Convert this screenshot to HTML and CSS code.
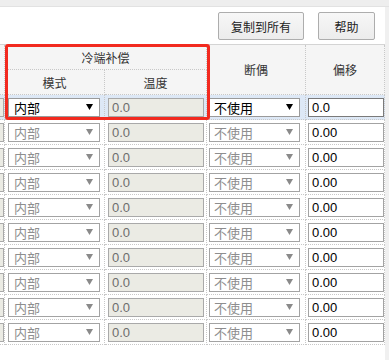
FILE: index.html
```html
<!DOCTYPE html>
<html>
<head>
<meta charset="utf-8">
<link rel="stylesheet" href="styles.css">
</head>
<body>
<div class="topbar"></div>
<div class="main">
  <div class="content">
    <div class="toolbar">
      <button class="btn btn-copy">复制到所有</button>
      <button class="btn btn-help">帮助</button>
    </div>
    <div class="tablewrap">
      <div class="grid">
        <div class="hcell c0 span2"></div>
        <div class="hcell group">冷端补偿</div>
        <div class="hcell c3 span2">断偶</div>
        <div class="hcell c4 span2">偏移</div>
        <div class="hcell c1">模式</div>
        <div class="hcell c2">温度</div>

        <div class="cell c0 sel"><span class="stub"></span></div>
        <div class="cell c1 sel"><div class="select active"><span>内部</span><svg class="arrow" width="7" height="6" viewBox="0 0 7 6"><path d="M0 0H7L3.5 6Z" fill="#000"/></svg></div></div>
        <div class="cell c2 sel"><div class="tinput">0.0</div></div>
        <div class="cell c3 sel"><div class="select active s3"><span>不使用</span><svg class="arrow" width="7" height="6" viewBox="0 0 7 6"><path d="M0 0H7L3.5 6Z" fill="#000"/></svg></div></div>
        <div class="cell c4 sel"><div class="oinput active">0.0</div></div>
      </div>
      <div class="grid" id="rows"></div>
      <div class="redbox"></div>
    </div>
  </div>
  <div class="strip"></div>
</div>
<script src="app.js"></script>
</body>
</html>
```
FILE: app.js
```js
var rows = document.getElementById('rows');
var html = '';
for (var i = 0; i < 9; i++) {
  html += '<div class="cell c0"><span class="stub"></span></div>' +
    '<div class="cell c1"><div class="select"><span>内部</span><svg class="arrow" width="7" height="6" viewBox="0 0 7 6"><path d="M0 0H7L3.5 6Z" fill="#8a8a8a"/></svg></div></div>' +
    '<div class="cell c2"><div class="tinput">0.0</div></div>' +
    '<div class="cell c3"><div class="select s3"><span>不使用</span><svg class="arrow" width="7" height="6" viewBox="0 0 7 6"><path d="M0 0H7L3.5 6Z" fill="#8a8a8a"/></svg></div></div>' +
    '<div class="cell c4"><div class="oinput">0.00</div></div>';
}
rows.innerHTML = html;
```
FILE: styles.css
```css
* { box-sizing: border-box; }
html, body { margin: 0; padding: 0; background: #fff; }
body {
  width: 389px;
  height: 360px;
  overflow: hidden;
  font-family: "Liberation Sans", "Noto Sans CJK SC", sans-serif;
  font-size: 13px;
  color: #000;
}
.topbar {
  height: 7px;
  background: #eeeeee;
  border-bottom: 1px solid #e2e2e2;
}
.main {
  display: flex;
  height: 353px;
}
.content {
  width: 385px;
  flex: none;
}
.strip {
  flex: 1;
  background: #f0f0f0;
}
.toolbar {
  height: 37px;
  display: flex;
  justify-content: flex-end;
  align-items: flex-start;
  padding-top: 5px;
  padding-right: 10px;
  gap: 14px;
}
.btn {
  height: 28px;
  border: 1px solid #adadad;
  border-radius: 2px;
  background: linear-gradient(#f7f7f7, #ececec);
  font-family: "Noto Sans CJK SC", sans-serif;
  font-size: 12px;
  color: #222;
  padding: 0;
}
.btn-copy { width: 86px; }
.btn-help { width: 57px; }
.tablewrap {
  position: relative;
  border-top: 1px solid #d4d4d4;
}
.grid {
  display: grid;
  grid-template-columns: 5px 100px 102px 99px 79px;
}
.hcell {
  background: #f5f5f5;
  border-right: 1px dotted #c8c8c8;
  border-bottom: 1px dotted #c8c8c8;
  height: 25px;
  display: flex;
  align-items: center;
  justify-content: center;
  font-family: "Noto Sans CJK SC", sans-serif;
  font-size: 12px;
  color: #333;
}
.hcell.span2 { grid-row: span 2; height: 50px; }
.hcell.group { grid-column: span 2; }
.cell {
  height: 25px;
  border-right: 1px dotted #c8c8c8;
  border-bottom: 1px dotted #c8c8c8;
  display: flex;
  align-items: center;
  background: #fff;
}
.cell.sel { background: #dde8f6; }
.stub {
  width: 4px;
  height: 19px;
  background: #ebebe4;
  border: 1px solid #a9a9a9;
  border-left: none;
}
.c0 { overflow: hidden; }
.select {
  margin-left: 3px;
  width: 92px;
  height: 19px;
  border: 1px solid #a3a3a3;
  background: #fff;
  display: flex;
  align-items: center;
  justify-content: space-between;
  padding: 0 6px 0 5px;
  font-family: "Noto Sans CJK SC", sans-serif;
  font-size: 13px;
  color: #8e8e8e;
  line-height: 17px;
}
.select.active { color: #000; border-color: #9a9a9a; }
.select.s3 { margin-left: 2px; width: 91px; padding-left: 4px; }
.tinput {
  margin-left: 3px;
  width: 96px;
  height: 19px;
  background: #ebebe4;
  border: 1px solid #a9a9a9;
  padding-left: 3px;
  color: #6d6d6d;
  line-height: 17px;
  font-size: 13px;
}
.oinput {
  margin-left: 2px;
  width: 76px;
  height: 19px;
  background: #fff;
  border: 1px solid #a3a3a3;
  padding-left: 3px;
  color: #000;
  line-height: 17px;
  font-size: 13px;
}
.oinput.active { border-color: #7a7a7a; }
.redbox {
  position: absolute;
  left: 5px;
  top: -1px;
  width: 205px;
  height: 76px;
  border: 3px solid #f22a1f;
  border-radius: 3px;
  pointer-events: none;
}
```
